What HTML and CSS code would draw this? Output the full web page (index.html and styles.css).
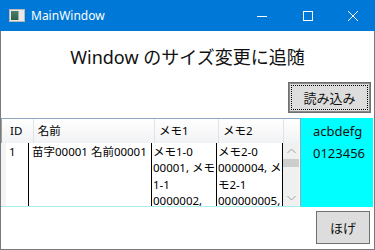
FILE: index.html
```html
<!DOCTYPE html>
<html lang="ja">
<head>
  <meta charset="UTF-8" />
  <title>MainWindow</title>
  <link rel="stylesheet" href="styles.css">
</head>
<body>
  <div class="window">
    <div class="titlebar">
      <span class="app-icon"><span class="app-icon-pane"></span></span>
      <span class="title">MainWindow</span>
      <span class="caption-btn">
        <svg width="10" height="10" viewBox="0 0 10 10"><path d="M0 5.5h10" stroke="#fff" stroke-width="1"/></svg>
      </span>
      <span class="caption-btn">
        <svg width="10" height="10" viewBox="0 0 10 10"><rect x="0.5" y="0.5" width="9" height="9" fill="none" stroke="#fff" stroke-width="1"/></svg>
      </span>
      <span class="caption-btn">
        <svg width="10" height="10" viewBox="0 0 10 10"><path d="M0 0L10 10M10 0L0 10" stroke="#fff" stroke-width="1"/></svg>
      </span>
    </div>

    <div class="content">
      <h1 class="heading">Window のサイズ変更に追随</h1>
      <div class="load-row">
        <button class="btn btn-default">読み込み</button>
      </div>

      <div class="middle">
        <div class="grid">
          <div class="grid-head">
            <div class="hcell col-id">ID</div>
            <div class="hcell col-name">名前</div>
            <div class="hcell col-memo1">メモ1</div>
            <div class="hcell col-memo2">メモ2</div>
            <div class="hcell col-scroll"></div>
          </div>
          <div class="grid-row">
            <div class="cell col-id">1</div>
            <div class="cell col-name">苗字00001 名前00001</div>
            <div class="cell col-memo1">
              <div>メモ1-0</div>
              <div>00001, メモ</div>
              <div>1-1</div>
              <div>0000002,</div>
            </div>
            <div class="cell col-memo2">
              <div>メモ2-0</div>
              <div>0000004, メ</div>
              <div>モ2-1</div>
              <div>000000005,</div>
            </div>
            <div class="scrollbar">
              <svg class="arrow" width="9" height="6" viewBox="0 0 9 6"><path d="M0.5 5L4.5 1L8.5 5" fill="none" stroke="#a0a0a0" stroke-width="1"/></svg>
              <div class="thumb"></div>
              <div class="track"></div>
              <svg class="arrow" width="9" height="6" viewBox="0 0 9 6"><path d="M0.5 1L4.5 5L8.5 1" fill="none" stroke="#a0a0a0" stroke-width="1"/></svg>
            </div>
          </div>
        </div>
        <div class="side">
          <div>acbdefg</div>
          <div>0123456</div>
        </div>
      </div>

      <div class="bottom-row">
        <button class="btn btn-hoge">ほげ</button>
      </div>
    </div>
  </div>
</body>
</html>
```

FILE: styles.css
```css
html, body {
  margin: 0;
  padding: 0;
}
body {
  width: 375px;
  height: 250px;
  overflow: hidden;
  font-family: "Noto Sans", "Noto Sans CJK JP", sans-serif;
  color: #000;
}
.window {
  box-sizing: border-box;
  width: 375px;
  height: 250px;
  border: 1px solid #7a7a7a;
  border-top: none;
  display: flex;
  flex-direction: column;
  background: #fff;
}
.titlebar {
  height: 31px;
  margin: 0 -1px;
  background: #0078d7;
  display: flex;
  align-items: center;
  color: #fff;
  flex-shrink: 0;
}
.app-icon {
  box-sizing: border-box;
  width: 16px;
  height: 13px;
  margin-left: 9px;
  border: 1px solid #b9b9b9;
  background: #e8e8e8;
  display: flex;
  padding: 1px;
}
.app-icon-pane {
  width: 7px;
  background: linear-gradient(#4d7f6a, #2f5f48);
  border-right: 1px solid #9fb0a8;
}
.title {
  margin-left: 6px;
  font-size: 12px;
  flex: 1;
}
.caption-btn {
  width: 46px;
  height: 31px;
  display: flex;
  align-items: center;
  justify-content: center;
}
.caption-btn:last-child {
  width: 44px;
}
.content {
  flex: 1;
  display: flex;
  flex-direction: column;
}
.heading {
  margin: 0;
  padding-top: 12px;
  height: 30px;
  line-height: 28px;
  font-size: 18px;
  font-weight: normal;
  text-align: center;
  color: #111;
}
.load-row {
  display: flex;
  justify-content: flex-end;
  padding: 9px 3px 0 0;
}
.btn {
  box-sizing: border-box;
  background: #dddddd;
  border: 1px solid #707070;
  border-radius: 0;
  font-family: "Noto Sans CJK JP", sans-serif;
  font-size: 13px;
  color: #111;
  padding: 0;
}
.btn-default {
  width: 83px;
  height: 31px;
  outline: 1px dotted #000;
  outline-offset: -4px;
  box-shadow: inset 0 0 0 1px #8a8a8a;
}
.middle {
  display: flex;
  margin-top: 5px;
  height: 89px;
}
.grid {
  box-sizing: border-box;
  width: 300px;
  border: 1px solid #8ca6c0;
  border-left-color: #a0a0a0;
  border-bottom-color: #a8eef4;
  display: flex;
  flex-direction: column;
  font-size: 11.5px;
}
.grid-head {
  display: flex;
  height: 24px;
  background: linear-gradient(#ffffff, #f1f2f4);
  flex-shrink: 0;
}
.hcell {
  box-sizing: border-box;
  border-right: 1px solid #dfe2e6;
  line-height: 24px;
  padding-left: 4px;
}
.col-id { width: 28px; padding-left: 8px; }
.col-name { width: 123px; }
.col-memo1 { width: 65px; }
.col-memo2 { width: 66px; }
.col-scroll { width: 16px; border-right: none; }
.grid-row {
  flex: 1;
  display: flex;
  overflow: hidden;
  border-left: 5px solid #f4f4f4;
  margin-left: -1px;
}
.grid-head .col-id { width: 32px; }
.grid-row .col-id { width: 23px; padding-left: 3px; }
.cell {
  box-sizing: border-box;
  border-right: 1px solid #000;
  padding-top: 1px;
  line-height: 16.3px;
  overflow: hidden;
  white-space: nowrap;
}
.grid-row .col-name { padding-left: 3px; }
.grid-row .col-memo1, .grid-row .col-memo2 { padding-left: 1px; }
.scrollbar {
  width: 16px;
  background: #f0f0f0;
  display: flex;
  flex-direction: column;
  align-items: center;
}
.arrow {
  margin: 5px 0;
}
.thumb {
  width: 16px;
  height: 8px;
  background: #cdcdcd;
}
.track {
  flex: 1;
}
.side {
  flex: 1;
  background: #00ffff;
  margin-right: 1px;
  padding: 2px 0 0 12px;
  font-size: 13px;
  line-height: 22px;
  color: #111;
}
.bottom-row {
  display: flex;
  justify-content: flex-end;
  padding: 4px 4px 0 0;
}
.btn-hoge {
  width: 54px;
  height: 33px;
}
```
